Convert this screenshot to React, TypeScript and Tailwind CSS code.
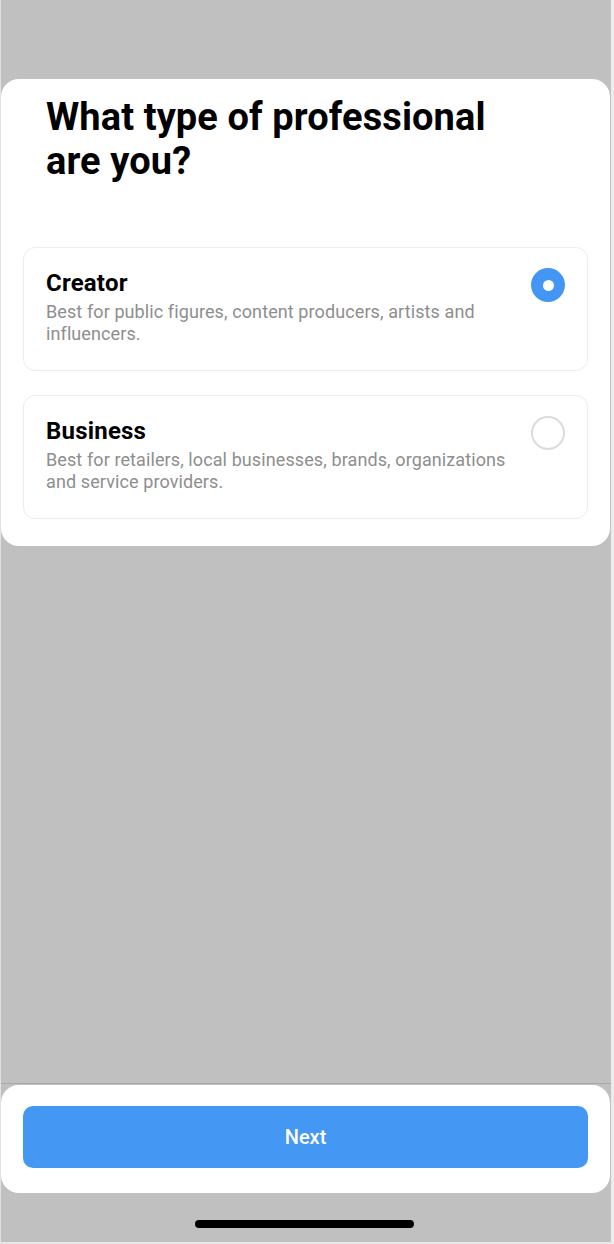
import React from "react";

function Radio({ checked }: { checked: boolean }) {
  if (checked) {
    return (
      <div className="w-[34px] h-[34px] rounded-full bg-[#4496f4] flex items-center justify-center shrink-0">
        <div className="w-[11px] h-[11px] rounded-full bg-white" />
      </div>
    );
  }
  return <div className="w-[34px] h-[34px] rounded-full border-2 border-[#dbdbdb] shrink-0" />;
}

function Option({ title, desc, checked }: { title: string; desc: string; checked: boolean }) {
  return (
    <div className="h-[124px] rounded-[12px] border border-[#ececec] bg-white flex pl-[22px] pr-[22px] pt-[20px]">
      <div className="flex-1 pr-[8px]">
        <div className="text-[24px] leading-[30px] font-bold text-black tracking-[0.2px]">{title}</div>
        <div className="text-[18px] leading-[22px] text-[#8e8e8e] mt-[3px] tracking-[0.1px]">{desc}</div>
      </div>
      <div>
        <Radio checked={checked} />
      </div>
    </div>
  );
}

export default function App() {
  return (
    <div
      className="w-[614px] h-[1244px] bg-[#c0c0c0] flex overflow-hidden"
      style={{ fontFamily: "Roboto, 'Noto Sans', sans-serif" }}
    >
      <div className="w-px bg-[#e2e2e2]" />
      <div className="w-[610px] flex flex-col">
        <div className="h-[79px]" />
        <div className="w-[609px] bg-white rounded-[18px] px-[22px] pb-[27px]">
          <h1 className="text-[38px] leading-[44px] font-bold text-black pl-[23px] pt-[16px] tracking-[0.1px]">
            What type of professional
            <br />
            are you?
          </h1>
          <div className="h-[64px]" />
          <div className="flex flex-col gap-[24px]">
            <Option
              title="Creator"
              desc="Best for public figures, content producers, artists and influencers."
              checked
            />
            <Option
              title="Business"
              desc="Best for retailers, local businesses, brands, organizations and service providers."
              checked={false}
            />
          </div>
        </div>
        <div className="flex-1" />
        <div className="h-px bg-[#a9a9a9]" />
        <div className="h-px" />
        <div className="w-[609px] h-[108px] bg-white rounded-[18px] px-[22px] pt-[21px]">
          <button className="w-full h-[62px] rounded-[10px] bg-[#4497f3] text-white text-[20px] font-medium">
            Next
          </button>
        </div>
        <div className="h-[49px] flex justify-center pt-[27px]">
          <div className="w-[219px] h-[8px] rounded-full bg-black ml-[-4px]" />
        </div>
        <div className="h-[2px] bg-[#e6e6e6]" />
      </div>
      <div className="w-[3px] bg-[#ececec]" />
    </div>
  );
}
